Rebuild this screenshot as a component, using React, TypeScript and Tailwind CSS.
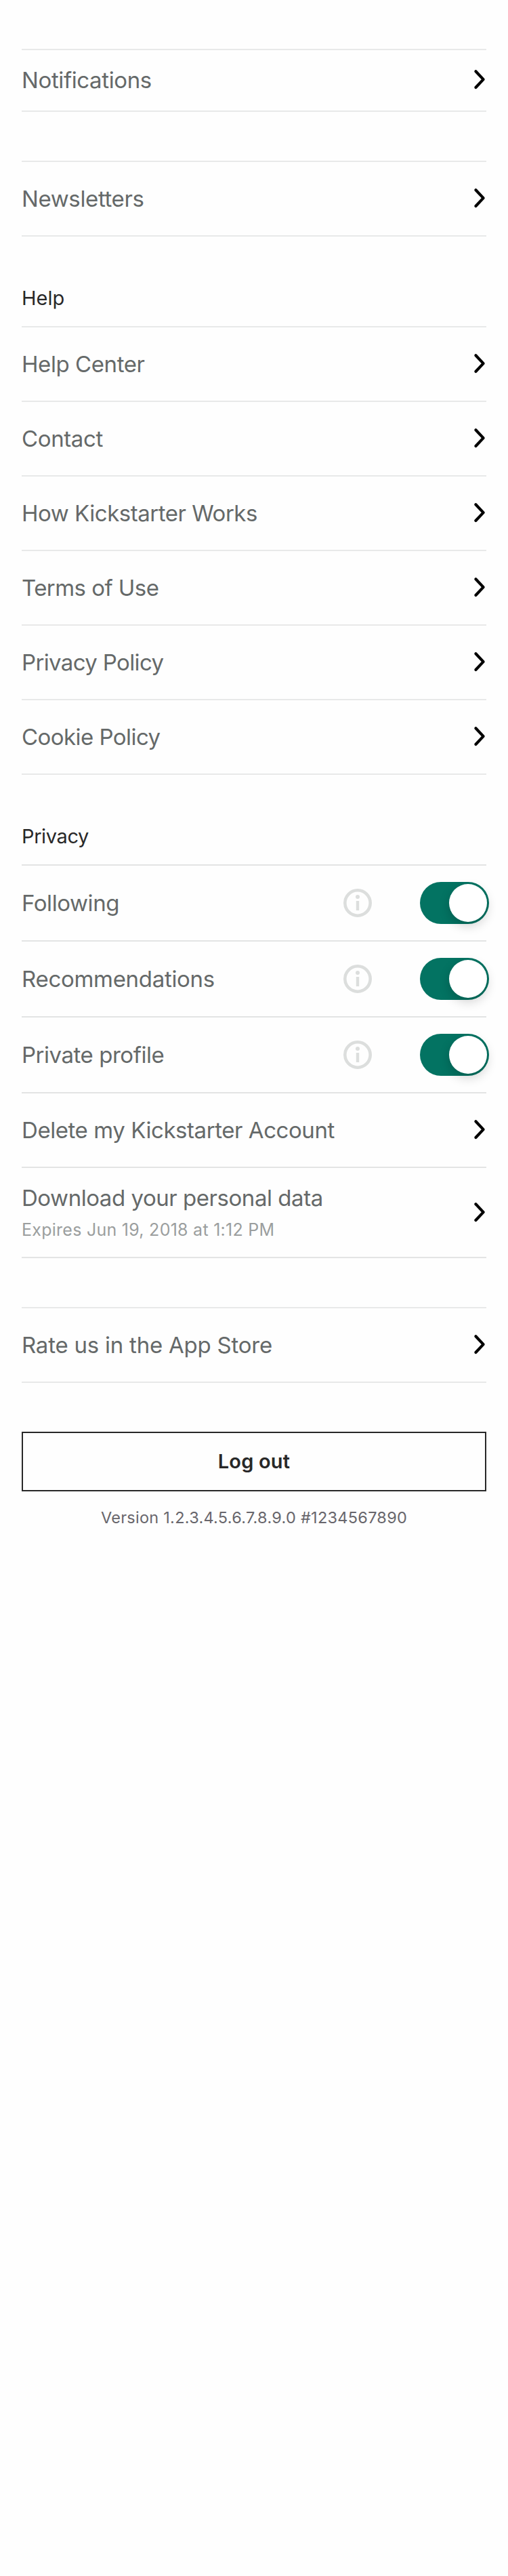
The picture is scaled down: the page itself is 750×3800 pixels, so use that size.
import { useState, type ReactNode } from "react";

function Chevron() {
  return (
    <svg width="20" height="32" viewBox="0 0 20 32" fill="none" className="shrink-0 -translate-y-px">
      <path
        d="M4.4 4.2 15.6 16.1 4.4 28"
        stroke="#000"
        strokeWidth="4.2"
        strokeLinecap="round"
        strokeLinejoin="round"
      />
    </svg>
  );
}

function InfoIcon() {
  return (
    <svg width="42" height="42" viewBox="0 0 42 42" className="shrink-0">
      <circle cx="21" cy="21" r="18.7" fill="none" stroke="#dcdedd" strokeWidth="4.6" />
      <circle cx="21" cy="12.1" r="3" fill="#dcdedd" />
      <rect x="18.8" y="18" width="4.4" height="14" fill="#dcdedd" />
    </svg>
  );
}

function Toggle({ label }: { label: string }) {
  const [on, setOn] = useState(true);
  return (
    <button
      type="button"
      role="switch"
      aria-checked={on}
      aria-label={label}
      onClick={() => setOn(!on)}
      className={`-mr-1 flex h-[62px] w-[102px] shrink-0 items-center rounded-full p-[3px] ${on ? "justify-end bg-[#037362]" : "justify-start bg-[#dcdedd]"}`}
    >
      <span className="size-14 rounded-full bg-white shadow-[0_6px_16px_rgba(0,0,0,0.18)]" />
    </button>
  );
}

function Group({ dark, children }: { dark?: boolean; children: ReactNode }) {
  return (
    <ul
      className={`divide-y-2 border-y-2 ${dark ? "divide-[#e3e4e4] border-[#e3e4e4]" : "divide-[#e8e9e9] border-[#e8e9e9]"}`}
    >
      {children}
    </ul>
  );
}

function LinkRow({ label, className = "h-[110px]", tracking }: { label: string; className?: string; tracking: string }) {
  return (
    <li className={`flex items-center justify-between ${className}`}>
      <span className={`text-[33px] leading-10 text-[#656969] ${tracking}`}>{label}</span>
      <Chevron />
    </li>
  );
}

function ToggleRow({ label, className = "h-[112px]", tracking }: { label: string; className?: string; tracking: string }) {
  return (
    <li className={`flex items-center ${className}`}>
      <span className={`flex-1 text-[33px] leading-10 text-[#656969] ${tracking}`}>{label}</span>
      <InfoIcon />
      <span className="w-[71px] shrink-0" />
      <Toggle label={label} />
    </li>
  );
}

function SectionTitle({ children, tracking = "" }: { children: ReactNode; tracking?: string }) {
  return <h2 className={`h-[132px] pt-[73px] text-[29px] leading-9 text-[#282828] ${tracking}`}>{children}</h2>;
}

export default function App() {
  return (
    <main className="min-h-[3800px] w-[750px] bg-[#fefefe] px-8 pt-[72px] font-['Inter',sans-serif] font-normal">
      <Group>
        <LinkRow label="Notifications" className="h-[89px] pb-px" tracking="tracking-[-0.385px]" />
      </Group>
      <div className="h-[72px]" />
      <Group>
        <LinkRow label="Newsletters" className="h-[108px]" tracking="tracking-[-0.38px]" />
      </Group>

      <SectionTitle>Help</SectionTitle>
      <Group>
        <LinkRow label="Help Center" tracking="tracking-[-0.43px]" />
        <LinkRow label="Contact" tracking="tracking-[-0.38px]" />
        <LinkRow label="How Kickstarter Works" tracking="tracking-[-0.48px]" />
        <LinkRow label="Terms of Use" tracking="tracking-[-0.55px]" />
        <LinkRow label="Privacy Policy" tracking="tracking-[-0.64px]" />
        <LinkRow label="Cookie Policy" className="h-[108px]" tracking="tracking-[-0.55px]" />
      </Group>

      <SectionTitle tracking="tracking-[-0.393px]">Privacy</SectionTitle>
      <Group dark>
        <ToggleRow label="Following" tracking="tracking-[-0.43px]" />
        <ToggleRow label="Recommendations" tracking="tracking-[-0.3px]" />
        <ToggleRow label="Private profile" tracking="tracking-[-0.463px]" />
        <LinkRow label="Delete my Kickstarter Account" tracking="tracking-[-0.436px]" />
        <li className="flex h-[131px] items-center justify-between">
          <div className="flex -translate-y-px flex-col gap-3">
            <span className="text-[33px] leading-10 tracking-[-0.46px] text-[#656969]">Download your personal data</span>
            <span className="text-[25px] leading-[30px] tracking-[0.26px] text-[#9b9e9e]">
              Expires Jun 19, 2018 at 1:12 PM
            </span>
          </div>
          <Chevron />
        </li>
      </Group>

      <div className="h-[72px]" />
      <Group>
        <LinkRow label="Rate us in the App Store" className="h-[108px]" tracking="tracking-[-0.225px]" />
      </Group>

      <button
        type="button"
        className="mt-[72px] flex h-[88px] w-full items-center justify-center border-2 border-[#282828] bg-[#fefefe] text-[29px] leading-9 font-semibold tracking-[0.18px] text-[#282828]"
      >
        Log out
      </button>
      <p className="mt-6 text-center text-[23.5px] leading-[30px] tracking-[0.27px] text-[#68666c]">
        Version 1.2.3.4.5.6.7.8.9.0 #1234567890
      </p>
    </main>
  );
}
